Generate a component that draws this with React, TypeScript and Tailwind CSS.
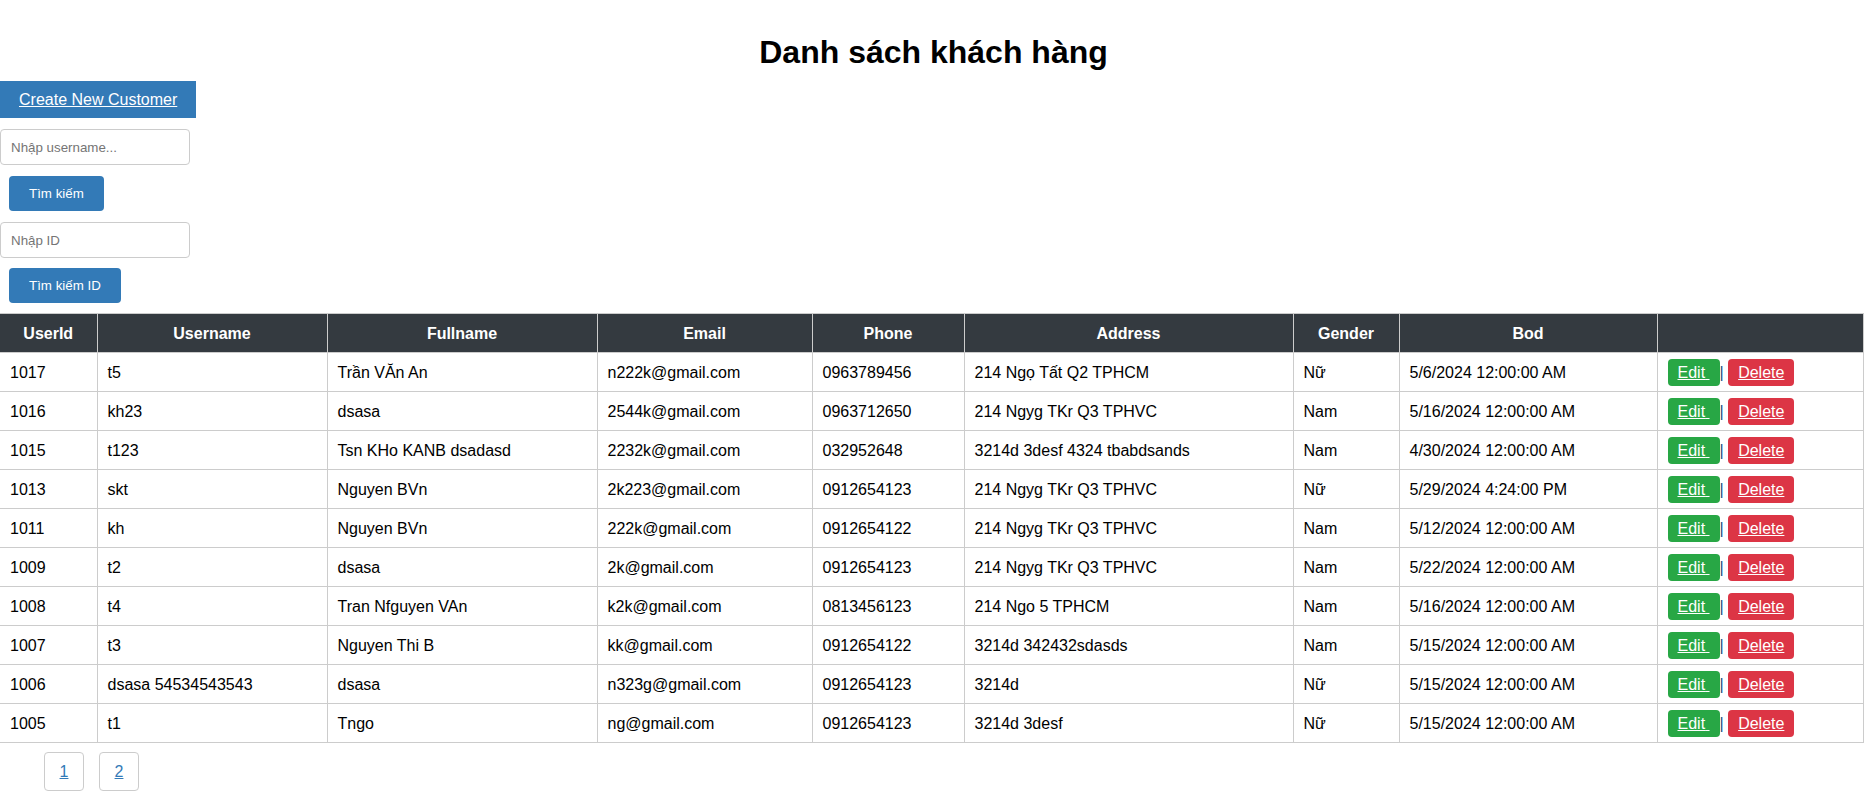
import React from 'react'

type Customer = {
  id: number
  username: string
  fullname: string
  email: string
  phone: string
  address: string
  gender: string
  bod: string
}

const customers: Customer[] = [
  { id: 1017, username: 't5', fullname: 'Trần VĂn An', email: 'n222k@gmail.com', phone: '0963789456', address: '214 Ngọ Tất Q2 TPHCM', gender: 'Nữ', bod: '5/6/2024 12:00:00 AM' },
  { id: 1016, username: 'kh23', fullname: 'dsasa', email: '2544k@gmail.com', phone: '0963712650', address: '214 Ngyg TKr Q3 TPHVC', gender: 'Nam', bod: '5/16/2024 12:00:00 AM' },
  { id: 1015, username: 't123', fullname: 'Tsn KHo KANB dsadasd', email: '2232k@gmail.com', phone: '032952648', address: '3214d 3desf 4324 tbabdsands', gender: 'Nam', bod: '4/30/2024 12:00:00 AM' },
  { id: 1013, username: 'skt', fullname: 'Nguyen BVn', email: '2k223@gmail.com', phone: '0912654123', address: '214 Ngyg TKr Q3 TPHVC', gender: 'Nữ', bod: '5/29/2024 4:24:00 PM' },
  { id: 1011, username: 'kh', fullname: 'Nguyen BVn', email: '222k@gmail.com', phone: '0912654122', address: '214 Ngyg TKr Q3 TPHVC', gender: 'Nam', bod: '5/12/2024 12:00:00 AM' },
  { id: 1009, username: 't2', fullname: 'dsasa', email: '2k@gmail.com', phone: '0912654123', address: '214 Ngyg TKr Q3 TPHVC', gender: 'Nam', bod: '5/22/2024 12:00:00 AM' },
  { id: 1008, username: 't4', fullname: 'Tran Nfguyen VAn', email: 'k2k@gmail.com', phone: '0813456123', address: '214 Ngo 5 TPHCM', gender: 'Nam', bod: '5/16/2024 12:00:00 AM' },
  { id: 1007, username: 't3', fullname: 'Nguyen Thi B', email: 'kk@gmail.com', phone: '0912654122', address: '3214d 342432sdasds', gender: 'Nam', bod: '5/15/2024 12:00:00 AM' },
  { id: 1006, username: 'dsasa 54534543543', fullname: 'dsasa', email: 'n323g@gmail.com', phone: '0912654123', address: '3214d', gender: 'Nữ', bod: '5/15/2024 12:00:00 AM' },
  { id: 1005, username: 't1', fullname: 'Tngo', email: 'ng@gmail.com', phone: '0912654123', address: '3214d 3desf', gender: 'Nữ', bod: '5/15/2024 12:00:00 AM' },
]

const headers = ['UserId', 'Username', 'Fullname', 'Email', 'Phone', 'Address', 'Gender', 'Bod', '']
const colWidths = ['w-[97px]', 'w-[230px]', 'w-[270px]', 'w-[215px]', 'w-[152px]', 'w-[329px]', 'w-[106px]', 'w-[258px]', 'w-[206px]']

const td = 'border border-[#ccc] px-[10px] py-0 text-left whitespace-nowrap'

const App = () => {
  return (
    <div className="min-h-screen bg-white font-['Liberation_Sans',Arial,sans-serif] text-[16px] text-black">
      <h1 className="pt-[34px] text-center text-[32px] font-bold leading-[37px]">Danh sách khách hàng</h1>

      <div className="mt-[10px] flex flex-col items-start">
        <a href="#" className="flex h-[37px] items-center bg-[#337ab7] px-[19px] text-[16px] text-white underline">
          Create New Customer
        </a>
        <input
          className="mt-[11px] h-[36px] w-[190px] rounded-[4px] border border-[#ccc] px-[10px] text-[13.33px] placeholder:text-[#757575]"
          placeholder="Nhập username..."
        />
        <button className="ml-[9px] mt-[11px] h-[35px] rounded-[4px] bg-[#337ab7] px-[20px] text-[13.33px] text-white">
          Tìm kiếm
        </button>
        <input
          className="mt-[11px] h-[36px] w-[190px] rounded-[4px] border border-[#ccc] px-[10px] text-[13.33px] placeholder:text-[#757575]"
          placeholder="Nhập ID"
        />
        <button className="ml-[9px] mt-[10px] h-[35px] rounded-[4px] bg-[#337ab7] px-[20px] text-[13.33px] text-white">
          Tìm kiếm ID
        </button>
      </div>

      <table className="mt-[10px] w-[1863px] table-fixed border-collapse leading-[19px]">
        <colgroup>
          {colWidths.map((w, i) => (
            <col key={i} className={w} />
          ))}
        </colgroup>
        <thead>
          <tr className="h-[39px] bg-[#343a40]">
            {headers.map((h, i) => (
              <th key={i} className={`border border-[#ccc] px-[10px] py-0 text-center font-bold text-white ${i === 0 ? 'border-l-0' : ''}`}>
                {h}
              </th>
            ))}
          </tr>
        </thead>
        <tbody>
          {customers.map((c) => (
            <tr key={c.id} className="h-[39px]">
              <td className={`${td} border-l-0`}>{c.id}</td>
              <td className={td}>{c.username}</td>
              <td className={td}>{c.fullname}</td>
              <td className={td}>{c.email}</td>
              <td className={td}>{c.phone}</td>
              <td className={td}>{c.address}</td>
              <td className={td}>{c.gender}</td>
              <td className={td}>{c.bod}</td>
              <td className={td}>
                <a href="#" className="inline-block rounded-[4px] bg-[#28a745] px-[10px] py-[4px] text-white underline">
                  Edit{'\u00a0'}
                </a>
                <span className="text-[#1d4f7c]">|</span>{' '}
                <a href="#" className="inline-block rounded-[4px] bg-[#dc3545] px-[10px] py-[4px] text-white underline">
                  Delete
                </a>
              </td>
            </tr>
          ))}
        </tbody>
      </table>

      <div className="ml-[44px] mt-[9px] flex gap-[15px]">
        {[1, 2].map((p) => (
          <div key={p} className="flex h-[39px] w-[40px] items-center justify-center rounded-[4px] border border-[#ccc]">
            <a href="#" className="text-[#337ab7] underline">
              {p}
            </a>
          </div>
        ))}
      </div>
    </div>
  )
}

export default App
